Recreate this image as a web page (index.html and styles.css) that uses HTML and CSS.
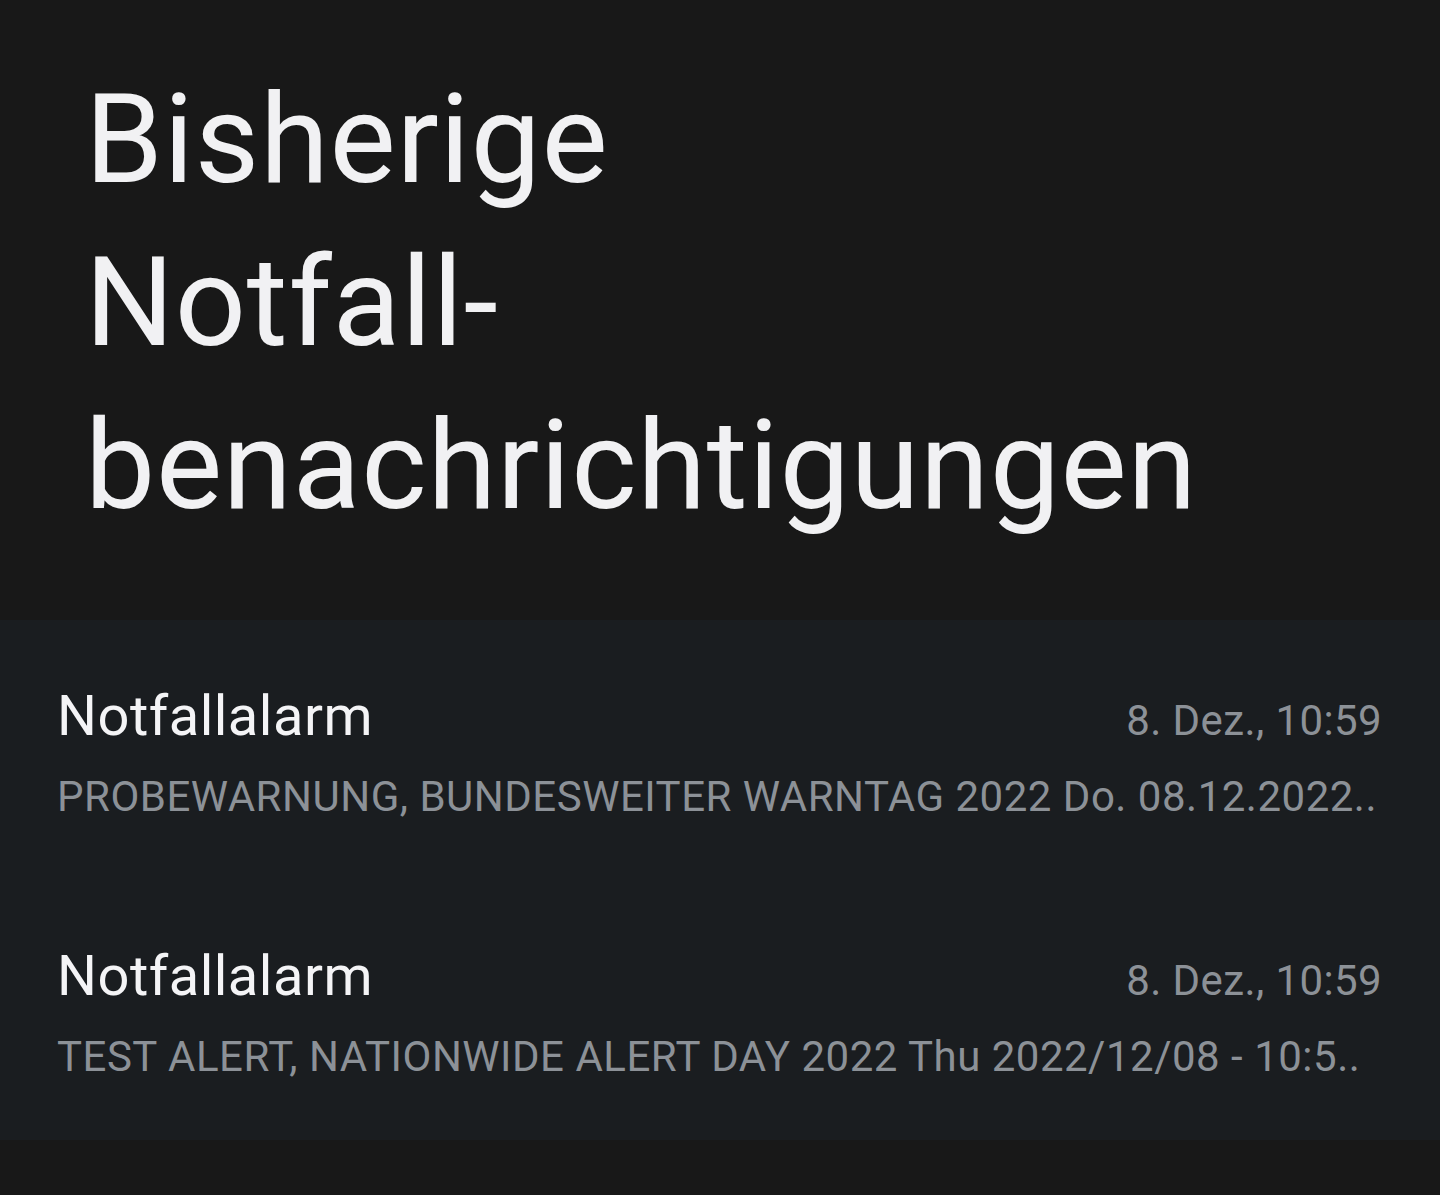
FILE: index.html
```html
<!DOCTYPE html>
<html lang="de">
<head>
  <meta charset="UTF-8" />
  <title>Bisherige Notfallbenachrichtigungen</title>
  <link rel="stylesheet" href="styles.css">
</head>
<body>
  <header class="header">
    <h1 class="title">Bisherige<br>Notfall-<br>benachrichtigungen</h1>
  </header>

  <ul class="alerts">
    <li class="alert">
      <div class="alert-top">
        <span class="alert-name">Notfallalarm</span>
        <span class="alert-time">8. Dez., 10:59</span>
      </div>
      <div class="alert-text">PROBEWARNUNG, BUNDESWEITER WARNTAG 2022 Do. 08.12.2022..</div>
    </li>
    <li class="alert">
      <div class="alert-top">
        <span class="alert-name">Notfallalarm</span>
        <span class="alert-time">8. Dez., 10:59</span>
      </div>
      <div class="alert-text">TEST ALERT, NATIONWIDE ALERT DAY 2022 Thu 2022/12/08 - 10:5..</div>
    </li>
  </ul>
</body>
</html>
```

FILE: styles.css
```css
body {
  margin: 0;
  background-color: #181818;
  font-family: Roboto, "Noto Sans", sans-serif;
  color: #f2f2f4;
  height: 1195px;
}
.header {
  height: 620px;
  box-sizing: border-box;
  padding: 58px 0 0 85px;
}
.title {
  margin: 0;
  font-size: 125px;
  line-height: 163px;
  font-weight: 400;
  letter-spacing: 0.7px;
  color: #f1f1f3;
}
.alerts {
  list-style: none;
  margin: 0;
  padding: 0;
  background-color: #1a1d20;
}
.alert {
  height: 260px;
  box-sizing: border-box;
  padding: 64px 58px 0 57px;
}
.alert-top {
  display: flex;
  justify-content: space-between;
  align-items: baseline;
}
.alert-name {
  font-size: 56px;
  line-height: 64px;
  letter-spacing: 0.5px;
  color: #f4f4f6;
}
.alert-time {
  font-size: 42px;
  letter-spacing: 0.4px;
  color: #8c9197;
}
.alert-text {
  margin-top: 24px;
  font-size: 42px;
  line-height: 50px;
  letter-spacing: 0.5px;
  color: #8c9197;
  white-space: nowrap;
}
```
